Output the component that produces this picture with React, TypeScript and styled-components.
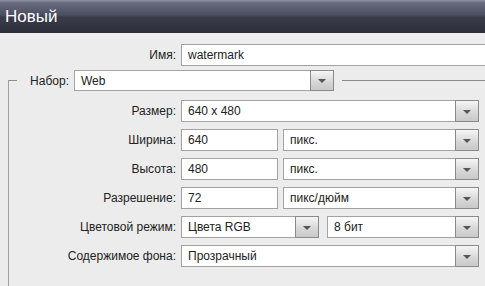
import styled, { createGlobalStyle } from "styled-components";

const Global = createGlobalStyle`
    html, body {
        margin: 0;
        padding: 0;
        background: #ececec;
        overflow: hidden;
    }
    body {
        font-family: "Liberation Sans", Arial, sans-serif;
        font-size: 12px;
        color: #222;
    }
`;

const Dialog = styled.div`
    width: 485px;
    height: 286px;
    overflow: hidden;
    background: #ececec;
`;

const TitleBar = styled.div`
    height: 33px;
    padding-left: 5px;
    display: flex;
    align-items: center;
    color: #fff;
    font-size: 17px;
    background: linear-gradient(
        #9194a6 0,
        #6a6d80 8%,
        #4c4f61 45%,
        #3a3c4b 52%,
        #2c2e3a 100%
    );
    box-sizing: border-box;
`;

const Body = styled.div`
    padding-top: 11px;
`;

const Row = styled.div<{ $labelWidth: number }>`
    display: flex;
    align-items: center;
    gap: 5px;
    height: 21px;
    & > label {
        width: ${(p) => p.$labelWidth}px;
        text-align: right;
        flex: none;
    }
`;

const Fields = styled.div<{ $gap?: number }>`
    display: flex;
    gap: ${(p) => p.$gap ?? 5}px;
`;

const TextBox = styled.div<{ $w: number; $h?: number }>`
    width: ${(p) => p.$w}px;
    height: ${(p) => p.$h ?? 22}px;
    box-sizing: border-box;
    border: 1px solid #a2a2a2;
    background: #fff;
    display: flex;
    align-items: center;
    padding-left: 6px;
    flex: none;
`;

const SelectBox = styled(TextBox)`
    position: relative;
`;

const Arrow = styled.span`
    position: absolute;
    right: -1px;
    top: -1px;
    bottom: -1px;
    width: 24px;
    box-sizing: border-box;
    border: 1px solid #8a8a8a;
    background: linear-gradient(#f6f6f6, #d6d6d6 60%, #c9c9c9);
    display: flex;
    align-items: center;
    justify-content: center;
    &::after {
        content: "";
        border-left: 4px solid transparent;
        border-right: 4px solid transparent;
        border-top: 4px solid #55565c;
        margin-top: 1px;
    }
`;

const Group = styled.fieldset`
    margin: 5px 0 0 8px;
    padding: 0;
    border: none;
    border-top: 1px solid #8d8d8d;
    border-left: 1px solid #a0a0a0;
    min-width: 0;
    height: 220px;
    legend {
        margin-left: 8px;
        padding: 0 8px 0 13px;
    }
`;

const GroupRows = styled.div`
    display: flex;
    flex-direction: column;
    gap: 7px;
    padding-top: 9px;
    & > div {
        height: 22px;
    }
`;

type Opt = { text: string; w: number; h?: number };

function Select({ text, w, h = 22 }: Opt) {
    return (
        <SelectBox $w={w} $h={h}>
            {text}
            <Arrow />
        </SelectBox>
    );
}

export default function App() {
    return (
        <Dialog>
            <Global />
            <TitleBar>Новый</TitleBar>
            <Body>
                <Row $labelWidth={176}>
                    <label>Имя:</label>
                    <TextBox $w={330} $h={22}>watermark</TextBox>
                </Row>
                <Group>
                    <legend>
                        <Row $labelWidth={39}>
                            <label>Набор:</label>
                            <Select text="Web" w={260} h={21} />
                        </Row>
                    </legend>
                    <GroupRows>
                        <Row $labelWidth={167}>
                            <label>Размер:</label>
                            <Select text="640 x 480" w={298} />
                        </Row>
                        <Row $labelWidth={167}>
                            <label>Ширина:</label>
                            <Fields>
                                <TextBox $w={97}>640</TextBox>
                                <Select text="пикс." w={196} />
                            </Fields>
                        </Row>
                        <Row $labelWidth={167}>
                            <label>Высота:</label>
                            <Fields>
                                <TextBox $w={97}>480</TextBox>
                                <Select text="пикс." w={196} />
                            </Fields>
                        </Row>
                        <Row $labelWidth={167}>
                            <label>Разрешение:</label>
                            <Fields>
                                <TextBox $w={97}>72</TextBox>
                                <Select text="пикс/дюйм" w={196} />
                            </Fields>
                        </Row>
                        <Row $labelWidth={167}>
                            <label>Цветовой режим:</label>
                            <Fields $gap={8}>
                                <Select text="Цвета RGB" w={138} />
                                <Select text="8 бит" w={152} />
                            </Fields>
                        </Row>
                        <Row $labelWidth={167}>
                            <label>Содержимое фона:</label>
                            <Select text="Прозрачный" w={298} />
                        </Row>
                    </GroupRows>
                </Group>
            </Body>
        </Dialog>
    );
}
